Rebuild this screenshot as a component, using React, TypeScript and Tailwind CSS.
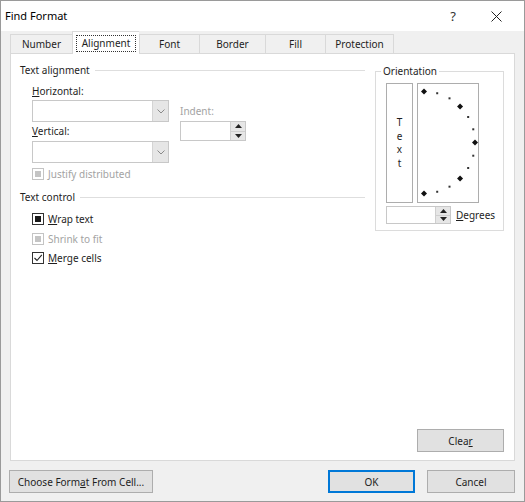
import React from "react";

const tabs = [
  { label: "Number", w: "w-[62px]" },
  { label: "Alignment", w: "w-[67px]", active: true },
  { label: "Font", w: "w-[60px]" },
  { label: "Border", w: "w-[66px]" },
  { label: "Fill", w: "w-[60px]" },
  { label: "Protection", w: "w-[69px]", last: true },
];

// dots of the orientation dial, every 15 degrees on a half circle
const dialDots = Array.from({ length: 13 }, (_, i) => {
  const a = ((-90 + i * 15) * Math.PI) / 180;
  return { x: 7 + 51 * Math.cos(a), y: 59.5 + 51 * Math.sin(a), big: i % 3 === 0 };
});

const SpinButtons = () => (
  <div className="w-[15px] h-full flex flex-col bg-[#e6e6e6] border-l border-[#cfcfcf]">
    <div className="flex-1 flex items-center justify-center border-b border-[#cfcfcf]">
      <svg width="7" height="4" viewBox="0 0 7 4">
        <path d="M0 4 L3.5 0 L7 4 Z" fill="#222" />
      </svg>
    </div>
    <div className="flex-1 flex items-center justify-center">
      <svg width="7" height="4" viewBox="0 0 7 4">
        <path d="M0 0 L7 0 L3.5 4 Z" fill="#222" />
      </svg>
    </div>
  </div>
);

const Combo = () => (
  <div className="w-[137px] h-[22px] flex bg-white border border-[#c8c8c8]">
    <div className="flex-1" />
    <div className="w-[16px] h-full flex items-center justify-center bg-[#e6e6e6] border-l border-[#d4d4d4]">
      <svg width="8" height="5" viewBox="0 0 8 5">
        <path d="M0.5 0.5 L4 4 L7.5 0.5" fill="none" stroke="#8a8a8a" strokeWidth="1" />
      </svg>
    </div>
  </div>
);

const Check = ({
  state,
  disabled,
  children,
}: {
  state: "none" | "mixed" | "checked";
  disabled?: boolean;
  children: React.ReactNode;
}) => (
  <div className={`h-[16px] flex items-center ml-[12px] ${disabled ? "text-[#a3a3a3]" : ""}`}>
    <div
      className={`w-[12px] h-[12px] flex items-center justify-center bg-white border ${
        disabled ? "border-[#c4c4c4]" : "border-[#333333]"
      }`}
    >
      {state === "mixed" && (
        <div className={`w-[6px] h-[6px] ${disabled ? "bg-[#c4c4c4]" : "bg-[#1a1a1a]"}`} />
      )}
      {state === "checked" && (
        <svg width="10" height="10" viewBox="0 0 10 10">
          <path d="M1.5 5 L4 7.5 L8.8 1.8" fill="none" stroke="#222" strokeWidth="1.1" />
        </svg>
      )}
    </div>
    <span className="ml-[4px]">{children}</span>
  </div>
);

const Button = ({
  children,
  w,
  primary,
}: {
  children: React.ReactNode;
  w: string;
  primary?: boolean;
}) => (
  <div
    className={`${w} h-[23px] flex items-center justify-center bg-[#e1e1e1] ${
      primary ? "border-2 border-[#0078d7]" : "border border-[#adadad]"
    }`}
  >
    {children}
  </div>
);

export default function App() {
  return (
    <div className="w-[525px] h-[502px] flex flex-col bg-[#f0f0f0] border border-[#9a9a9a] font-['Noto_Sans','Segoe_UI',sans-serif] text-[10px] text-[#1e1e1e] leading-[16px]">
      {/* Title bar */}
      <div className="h-[30px] shrink-0 flex items-center bg-white pl-[4px] pr-[22px]">
        <span className="text-[11px] text-black">Find Format</span>
        <div className="flex-1" />
        <span className="text-[13px] text-[#333] mr-[35px]">?</span>
        <svg width="11" height="11" viewBox="0 0 11 11">
          <path d="M0.5 0.5 L10.5 10.5 M10.5 0.5 L0.5 10.5" stroke="#222" strokeWidth="1" />
        </svg>
      </div>

      {/* Tabs */}
      <div className="h-[22px] shrink-0 flex items-end pl-[9px]">
        {tabs.map((t) =>
          t.active ? (
            <div
              key={t.label}
              className={`${t.w} h-[23px] -mb-px relative z-10 flex items-center justify-center bg-white border-t border-l border-[#d9d9d9]`}
            >
              <span className="w-[60px] h-[17px] flex items-center justify-center border border-dotted border-[#333]">
                {t.label}
              </span>
            </div>
          ) : (
            <div
              key={t.label}
              className={`${t.w} h-[19px] flex items-center justify-center bg-[#f0f0f0] border-t border-l border-[#d9d9d9] ${
                t.last ? "border-r" : ""
              }`}
            >
              {t.label}
            </div>
          )
        )}
      </div>

      {/* Tab panel */}
      <div className="h-[408px] shrink-0 mx-[9px] flex flex-col bg-white border border-[#d9d9d9]">
        <div className="flex items-start">
          {/* Left column */}
          <div className="w-[345px] ml-[9px] pt-[8px]">
            <div className="h-[16px] flex items-center">
              <span>Text alignment</span>
              <div className="flex-1 h-px bg-[#dedede] ml-[5px]" />
            </div>
            <div className="ml-[12px] mt-[5px]">
              <span className="underline">H</span>orizontal:
            </div>
            <div className="flex ml-[12px]">
              <div>
                <div className="mt-[1px]">
                  <Combo />
                </div>
                <div className="mt-[1px]">
                  <span className="underline">V</span>ertical:
                </div>
                <div className="mt-[2px]">
                  <Combo />
                </div>
              </div>
              <div className="ml-[11px]">
                <div className="mt-[4px] text-[#a3a3a3]">Indent:</div>
                <div className="mt-[2px] w-[66px] h-[20px] flex bg-white border border-[#c8c8c8]">
                  <div className="flex-1" />
                  <SpinButtons />
                </div>
              </div>
            </div>
            <div className="mt-[3px]">
              <Check state="mixed" disabled>
                Justify distributed
              </Check>
            </div>
            <div className="h-[16px] flex items-center mt-[7px]">
              <span>Text control</span>
              <div className="flex-1 h-px bg-[#dedede] ml-[5px]" />
            </div>
            <div className="mt-[6px]">
              <Check state="mixed">
                <span className="underline">W</span>rap text
              </Check>
            </div>
            <div className="mt-[4px]">
              <Check state="mixed" disabled>
                Shrink to fit
              </Check>
            </div>
            <div className="mt-[3px]">
              <Check state="checked">
                <span className="underline">M</span>erge cells
              </Check>
            </div>
          </div>

          {/* Orientation */}
          <fieldset className="w-[129px] ml-[10px] mt-[9px] border border-[#dcdcdc] pb-[6px]">
            <legend className="ml-[5px] px-[2px]">Orientation</legend>
            <div className="pl-[10px] mt-[4px]">
              <div className="flex gap-[4px]">
                <div className="w-[27px] h-[120px] flex flex-col items-center justify-center border border-[#adadad] leading-[13.5px]">
                  <span>T</span>
                  <span>e</span>
                  <span>x</span>
                  <span>t</span>
                </div>
                <svg width="62" height="120" viewBox="0 0 62 120">
                  <rect x="0.5" y="0.5" width="61" height="119" fill="white" stroke="#adadad" />
                  {dialDots.map((d, i) =>
                    d.big ? (
                      <path
                        key={i}
                        d={`M${d.x} ${d.y - 3} L${d.x + 3} ${d.y} L${d.x} ${d.y + 3} L${d.x - 3} ${d.y} Z`}
                        fill="#111"
                      />
                    ) : (
                      <rect key={i} x={d.x - 1} y={d.y - 1} width="2" height="2" fill="#333" />
                    )
                  )}
                </svg>
              </div>
              <div className="flex items-center mt-[3px]">
                <div className="w-[65px] h-[18px] flex bg-white border border-[#c8c8c8]">
                  <div className="flex-1" />
                  <SpinButtons />
                </div>
                <span className="ml-[5px]">
                  <span className="underline">D</span>egrees
                </span>
              </div>
            </div>
          </fieldset>
        </div>

        <div className="flex-1" />
        <div className="flex justify-end pr-[10px] pb-[8px]">
          <Button w="w-[87px]">
            <span>
              Clea<span className="underline">r</span>
            </span>
          </Button>
        </div>
      </div>

      {/* Bottom buttons */}
      <div className="flex mt-[9px] pl-[8px] pr-[9px]">
        <Button w="w-[144px]">
          <span>
            Choose Form<span className="underline">a</span>t From Cell...
          </span>
        </Button>
        <div className="flex-1" />
        <Button w="w-[87px]" primary>
          OK
        </Button>
        <div className="w-[12px]" />
        <Button w="w-[88px]">Cancel</Button>
      </div>
    </div>
  );
}
